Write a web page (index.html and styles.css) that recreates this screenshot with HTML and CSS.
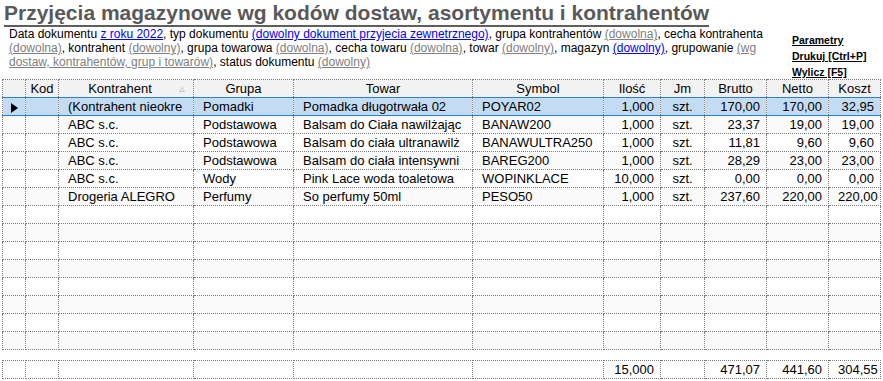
FILE: index.html
```html
<!DOCTYPE html>
<html lang="pl">
<head>
<meta charset="utf-8">
<title>Przyjęcia magazynowe</title>
<link rel="stylesheet" href="styles.css">
</head>
<body>
<div class="report">
  <div class="head"><h1 class="title">Przyjęcia magazynowe wg kodów dostaw, asortymentu i kontrahentów</h1></div>
  <div class="top">
    <p class="params">Data dokumentu <a class="lnk set">z roku 2022</a>, typ dokumentu <a class="lnk set">(dowolny dokument przyjecia zewnetrznego)</a>, grupa kontrahentów <a class="lnk">(dowolna)</a>, cecha kontrahenta <a class="lnk">(dowolna)</a>, kontrahent <a class="lnk">(dowolny)</a>, grupa towarowa <a class="lnk">(dowolna)</a>, cecha towaru <a class="lnk">(dowolna)</a>, towar <a class="lnk">(dowolny)</a>, magazyn <a class="lnk set">(dowolny)</a>, grupowanie <a class="lnk">(wg dostaw, kontrahentów, grup i towarów)</a>, status dokumentu <a class="lnk">(dowolny)</a></p>
    <nav class="actions">
      <a class="act">Parametry</a>
      <a class="act">Drukuj [Ctrl+P]</a>
      <a class="act">Wylicz [F5]</a>
    </nav>
  </div>
  <table class="grid">
    <colgroup>
      <col class="c-ind"><col class="c-kod"><col class="c-kon"><col class="c-gru"><col class="c-tow"><col class="c-sym"><col class="c-ilo"><col class="c-jm"><col class="c-bru"><col class="c-net"><col class="c-kos">
    </colgroup>
    <thead>
      <tr>
        <th></th><th>Kod</th><th class="sorted">Kontrahent<svg class="sort" width="6" height="5" viewBox="0 0 6 5"><path d="M3 0.5 L5.5 4.5 L0.5 4.5 Z" fill="none" stroke="#c8c8c8" stroke-width="1"/></svg></th><th>Grupa</th><th>Towar</th><th>Symbol</th><th>Ilość</th><th>Jm</th><th>Brutto</th><th>Netto</th><th>Koszt</th>
      </tr>
    </thead>
    <tbody>
      <tr class="sel"><td class="ind"><span class="arrow"></span></td><td></td><td>(Kontrahent nieokre</td><td>Pomadki</td><td>Pomadka długotrwała 02</td><td>POYAR02</td><td class="num">1,000</td><td class="ctr">szt.</td><td class="num">170,00</td><td class="num">170,00</td><td class="num">32,95</td></tr>
      <tr><td></td><td></td><td>ABC s.c.</td><td>Podstawowa</td><td>Balsam do Ciała nawilżając</td><td>BANAW200</td><td class="num">1,000</td><td class="ctr">szt.</td><td class="num">23,37</td><td class="num">19,00</td><td class="num">19,00</td></tr>
      <tr><td></td><td></td><td>ABC s.c.</td><td>Podstawowa</td><td>Balsam do ciała ultranawilż</td><td>BANAWULTRA250</td><td class="num">1,000</td><td class="ctr">szt.</td><td class="num">11,81</td><td class="num">9,60</td><td class="num">9,60</td></tr>
      <tr><td></td><td></td><td>ABC s.c.</td><td>Podstawowa</td><td>Balsam do ciała intensywni</td><td>BAREG200</td><td class="num">1,000</td><td class="ctr">szt.</td><td class="num">28,29</td><td class="num">23,00</td><td class="num">23,00</td></tr>
      <tr><td></td><td></td><td>ABC s.c.</td><td>Wody</td><td>Pink Lace woda toaletowa</td><td>WOPINKLACE</td><td class="num">10,000</td><td class="ctr">szt.</td><td class="num">0,00</td><td class="num">0,00</td><td class="num">0,00</td></tr>
      <tr><td></td><td></td><td>Drogeria ALEGRO</td><td>Perfumy</td><td>So perfumy 50ml</td><td>PESO50</td><td class="num">1,000</td><td class="ctr">szt.</td><td class="num">237,60</td><td class="num">220,00</td><td class="num">220,00</td></tr>
      <tr><td></td><td></td><td></td><td></td><td></td><td></td><td></td><td></td><td></td><td></td><td></td></tr>
      <tr><td></td><td></td><td></td><td></td><td></td><td></td><td></td><td></td><td></td><td></td><td></td></tr>
      <tr><td></td><td></td><td></td><td></td><td></td><td></td><td></td><td></td><td></td><td></td><td></td></tr>
      <tr><td></td><td></td><td></td><td></td><td></td><td></td><td></td><td></td><td></td><td></td><td></td></tr>
      <tr><td></td><td></td><td></td><td></td><td></td><td></td><td></td><td></td><td></td><td></td><td></td></tr>
      <tr><td></td><td></td><td></td><td></td><td></td><td></td><td></td><td></td><td></td><td></td><td></td></tr>
      <tr><td></td><td></td><td></td><td></td><td></td><td></td><td></td><td></td><td></td><td></td><td></td></tr>
      <tr><td></td><td></td><td></td><td></td><td></td><td></td><td></td><td></td><td></td><td></td><td></td></tr>
    </tbody>
  </table>
  <table class="grid totals">
    <colgroup>
      <col class="c-ind"><col class="c-kod"><col class="c-kon"><col class="c-gru"><col class="c-tow"><col class="c-sym"><col class="c-ilo"><col class="c-jm"><col class="c-bru"><col class="c-net"><col class="c-kos">
    </colgroup>
    <tbody>
      <tr><td></td><td></td><td></td><td></td><td></td><td></td><td class="num">15,000</td><td></td><td class="num">471,07</td><td class="num">441,60</td><td class="num">304,55</td></tr>
    </tbody>
  </table>
</div>
</body>
</html>
```

FILE: styles.css
```css
html, body {
  margin: 0;
  padding: 0;
  background: #ffffff;
}

body {
  font-family: "Liberation Sans", Arial, sans-serif;
  color: #000;
}

.head {
  padding-left: 4px;
  height: 27px;
}

.title {
  display: inline-block;
  margin: 0;
  font-size: 21px;
  line-height: 25px;
  font-weight: bold;
  color: #595959;
  border-bottom: 2px solid #5e5e5e;
}

.top {
  display: flex;
  height: 52px;
}

.params {
  margin: 0 0 0 9px;
  width: 770px;
  font-size: 12px;
  line-height: 14px;
}

.lnk {
  color: #808080;
  text-decoration: underline;
}

.lnk.set {
  color: #0000ff;
}

.actions {
  margin-left: 13px;
  padding-top: 5px;
  display: flex;
  flex-direction: column;
  align-items: flex-start;
}

.act {
  font-size: 10.5px;
  line-height: 16px;
  font-weight: bold;
  color: #000;
  text-decoration: underline;
}

.grid {
  margin-left: 2px;
  width: 878px;
  border-collapse: collapse;
  table-layout: fixed;
  font-size: 13px;
}

.c-ind { width: 23px; }
.c-kod { width: 33px; }
.c-kon { width: 135px; }
.c-gru { width: 100px; }
.c-tow { width: 179px; }
.c-sym { width: 131px; }
.c-ilo { width: 57px; }
.c-jm  { width: 44px; }
.c-bru { width: 62px; }
.c-net { width: 62px; }
.c-kos { width: 52px; }

.grid th,
.grid td {
  border: 1px dotted #7d7d7d;
  height: 17px;
  padding: 0 6px 0 9px;
  line-height: 17px;
  white-space: nowrap;
  overflow: hidden;
  text-align: left;
  vertical-align: middle;
}

.grid th {
  background: #f2f2f2;
  font-weight: normal;
  text-align: center;
  padding: 0 2px;
}

.grid th.sorted {
  position: relative;
  padding-right: 14px;
}

.sort {
  position: absolute;
  right: 8px;
  top: 7px;
}

.grid tbody tr:nth-child(even) td {
  background: #fafafa;
}

.grid td.num {
  text-align: right;
}

.grid td.ctr {
  text-align: center;
  padding: 0;
}

.grid tr.sel td {
  background: #c4dcf3;
  border-top: 1px solid #2b7fd9;
  border-bottom: 1px solid #2b7fd9;
}

.grid td.ind {
  padding: 0 0 0 8px;
}

.arrow {
  display: inline-block;
  width: 0;
  height: 0;
  border-top: 5px solid transparent;
  border-bottom: 5px solid transparent;
  border-left: 7px solid #000;
  vertical-align: middle;
}

.totals {
  margin-top: 10px;
}

.totals tbody tr:nth-child(even) td {
  background: transparent;
}
```
